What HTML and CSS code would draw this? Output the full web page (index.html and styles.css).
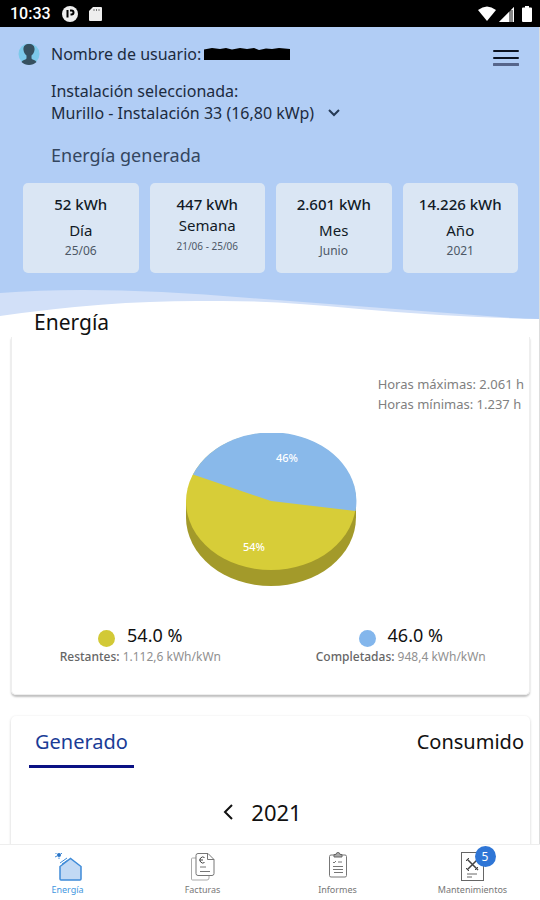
FILE: index.html
```html
<!DOCTYPE html>
<html lang="es">
<head>
  <meta charset="UTF-8" />
  <meta name="viewport" content="width=device-width, initial-scale=1" />
  <title>Energía</title>
  <link rel="stylesheet" href="styles.css">
</head>
<body>

<!-- Barra de estado -->
<div class="statusbar">
  <span class="hora">10:33</span>
  <svg width="16" height="16" viewBox="0 0 16 16">
    <circle cx="8" cy="8" r="8" fill="#eee"/>
    <path d="M5.500 4v7.500M8 4.500h1.500a2 2 0 0 1 0 4H8.500" fill="none" stroke="#000" stroke-width="2"/>
  </svg>
  <svg width="13" height="16" viewBox="0 0 13 16">
    <path d="M4 1h8a1 1 0 0 1 1 1v12a1 1 0 0 1-1 1H1a1 1 0 0 1-1-1V5z" fill="#eee"/>
    <path d="M5 3v2M7.500 3v2M10 3v2" stroke="#777" stroke-width="1"/>
  </svg>
  <div class="senales">
    <svg width="18" height="16" viewBox="0 0 18 16"><path d="M0 4Q9-3 18 4L9 15z" fill="#fff"/></svg>
    <svg width="16" height="16" viewBox="0 0 16 16">
      <path d="M0 16L15 1v15z" fill="#888"/>
      <path d="M0 16L10 6v10zM12 4l3-3v15h-1V4z" fill="#fff"/>
    </svg>
    <svg width="10" height="16" viewBox="0 0 10 16"><path d="M3 0h4v1.500h2a1 1 0 0 1 1 1V15a1 1 0 0 1-1 1H1a1 1 0 0 1-1-1V2.500a1 1 0 0 1 1-1h2z" fill="#fff"/></svg>
  </div>
</div>

<main>
  <header class="cabecera">
    <div class="usuario">
      <svg class="avatar" width="22" height="22" viewBox="0 0 22 22">
        <circle cx="11" cy="11" r="10.500" fill="#7cc9ea"/>
        <path d="M11 1c4 0 6 2.500 5.500 6-.3 2.500-1.500 4.500-3 5.500v3c1 1.500 4 1.500 5 3.500-4 4-11 4-15 0 1-2 4-2 5-3.500v-3C7 11.500 5.800 9.500 5.500 7 5 3.500 7 1 11 1z" fill="#36505f"/>
      </svg>
      <span>Nombre de usuario:</span>
      <svg class="oculto" width="86" height="12" viewBox="0 0 86 12">
        <path d="M0 12V1.500L8 0l8 1 6-1 6 1.500L36 0l7 1 7-1 5 2 7-1.500L68 1l7-1 11 1v11z" fill="#000"/>
      </svg>
      <button class="menu" type="button" aria-label="Menú">
        <svg width="26" height="18" viewBox="0 0 26 18">
          <path d="M1 2h24M1 9h24" stroke="#0b1220" stroke-width="2" stroke-linecap="round"/>
          <path d="M1 15.500h24" stroke="#56658a" stroke-width="3" stroke-linecap="round"/>
        </svg>
      </button>
    </div>

    <div class="instalacion">
      <label for="instalacion">Instalación seleccionada:</label>
      <div class="selector">
        <select id="instalacion">
          <option>Murillo - Instalación 33 (16,80 kWp)</option>
        </select>
        <svg width="12" height="8" viewBox="0 0 12 8"><path d="M1 1l5 5 5-5" fill="none" stroke="#263a55" stroke-width="2"/></svg>
      </div>
    </div>

    <h2>Energía generada</h2>

    <div class="periodos">
      <div class="periodo">
        <strong>52 kWh</strong>
        <span class="nombre">Día</span>
        <span class="fecha">25/06</span>
      </div>
      <div class="periodo semana">
        <strong>447 kWh</strong>
        <span class="nombre">Semana</span>
        <span class="fecha">21/06 - 25/06</span>
      </div>
      <div class="periodo">
        <strong>2.601 kWh</strong>
        <span class="nombre">Mes</span>
        <span class="fecha">Junio</span>
      </div>
      <div class="periodo">
        <strong>14.226 kWh</strong>
        <span class="nombre">Año</span>
        <span class="fecha">2021</span>
      </div>
    </div>

    <svg class="ola" viewBox="0 0 540 32" preserveAspectRatio="none">
      <path d="M0 5Q100-3 250 10L540 32H0z" fill="#d2e0f8"/>
      <path d="M0 28Q110 12 210 13Q270 12 360 21Q450 29 540 31V32H0z" fill="#fff"/>
    </svg>
  </header>

  <h1>Energía</h1>

  <!-- Gráfico de energía -->
  <section class="tarjeta energia">
    <div class="horas">
      <p>Horas máximas: 2.061 h</p>
      <p>Horas mínimas: 1.237 h</p>
    </div>

    <svg class="grafico" width="172" height="154" viewBox="0 0 172 154">
      <path d="M1 68.500V84.500A85 68.500 0 0 0 171 84.500V68.500z" fill="#a39a2a"/>
      <ellipse cx="86" cy="68.500" rx="85" ry="68.500" fill="#d7cd38"/>
      <path d="M86 68L8 41.500A85 68.500 0 0 1 170.500 78z" fill="#89b9ea"/>
      <text x="102" y="29">46%</text>
      <text x="69" y="118">54%</text>
    </svg>

    <div class="leyenda">
      <div>
        <p class="porcentaje"><span class="punto amarillo"></span>54.0 %</p>
        <p class="detalle"><b>Restantes:</b> 1.112,6 kWh/kWn</p>
      </div>
      <div>
        <p class="porcentaje"><span class="punto azul"></span>46.0 %</p>
        <p class="detalle"><b>Completadas:</b> 948,4 kWh/kWn</p>
      </div>
    </div>
  </section>

  <!-- Generado / Consumido -->
  <section class="tarjeta historico">
    <div class="pestanas">
      <button class="activa" type="button">Generado</button>
      <button type="button">Consumido</button>
    </div>
    <div class="anio">
      <button type="button" aria-label="Año anterior">
        <svg width="10" height="16" viewBox="0 0 10 16"><path d="M9 1L2 8l7 7" fill="none" stroke="#111" stroke-width="2"/></svg>
      </button>
      <span>2021</span>
    </div>
  </section>
</main>

<nav>
  <a class="actual" href="#energia">
    <svg width="32" height="32" viewBox="0 0 32 32" fill="none" stroke="#3f8bd8">
      <path d="M8 14.500L18.500 6.500 29 14.500V27a1 1 0 0 1-1 1H9a1 1 0 0 1-1-1z" fill="#c2d9f4" stroke-width="1.500"/>
      <path d="M8 11l7-5M10 12l6-4" stroke-width="1"/>
      <circle cx="7" cy="3" r="2" fill="#2874c8" stroke="none"/>
      <path d="M3.500 1l1 1M3 5l2-1M7 7V5.500M10 1l-1 1" stroke-width="1"/>
    </svg>
    <span>Energía</span>
  </a>
  <a href="#facturas">
    <svg width="32" height="32" viewBox="0 0 32 32" fill="none" stroke="#777">
      <path d="M9 6H5.500a1 1 0 0 0-1 1v20a1 1 0 0 0 1 1H20a2 2 0 0 0 2-2v-2.500" stroke="#aaa"/>
      <path d="M11 1.500h10l6 6V21.500a2 2 0 0 1-2 2H11a2 2 0 0 1-2-2v-18a2 2 0 0 1 2-2zM20.500 1.500v6H27"/>
      <path d="M17.500 5.500a3 3 0 1 0 0 5M12.500 8h3.500" stroke="#444"/>
      <path d="M13 15h6M13 19.500h10"/>
    </svg>
    <span>Facturas</span>
  </a>
  <a href="#informes">
    <svg width="32" height="32" viewBox="0 0 32 32" fill="none" stroke="#777">
      <rect x="7.500" y="3" width="17" height="22" rx="1.500"/>
      <path d="M12 5V2.500h2a2 2 0 0 1 4 0h2V5z" fill="#aaa" stroke="#666"/>
      <path d="M11 10l1 1 2-2M16 10h4M11 14.500h10M11 17.500h10M12 20.500h9"/>
    </svg>
    <span>Informes</span>
  </a>
  <a href="#mantenimientos">
    <svg width="32" height="32" viewBox="0 0 32 32" fill="none" stroke="#666">
      <rect x="4.500" y=".5" width="22" height="28"/>
      <path d="M10 7l11 11M20 8L10 18" stroke="#444" stroke-width="1.500"/>
      <path d="M9 9l3-3M18 18l3-3M9 16l3 3" stroke="#444"/>
      <path d="M10 22h10M10 25h5"/>
    </svg>
    <span>Mantenimientos</span>
    <span class="aviso">5</span>
  </a>
</nav>

</body>
</html>
```
FILE: styles.css
```css
* {
  box-sizing: border-box;
}

body {
  font-family: "Noto Sans", "Open Sans", sans-serif;
  background-color: #fff;
  color: #111;
  margin: 0;
  height: 100vh;
  display: flex;
  flex-direction: column;
}

h1, h2, p {
  margin: 0;
  font-weight: normal;
}

button {
  font-family: inherit;
  color: inherit;
  background: none;
  border: none;
  padding: 0;
  cursor: pointer;
}

svg {
  display: block;
  flex: none;
}

.statusbar {
  height: 27px;
  flex: none;
  padding: 0 8px 0 10px;
  background-color: #000;
  color: #fff;
  display: flex;
  align-items: center;
  gap: 11px;
}

.hora {
  font-family: Roboto, sans-serif;
  font-size: 16px;
  font-weight: 500;
}

.senales {
  margin-left: auto;
  display: flex;
  gap: 3px;
}

.senales svg:last-child {
  margin-left: 4px;
}

main {
  flex: 1;
  min-height: 0;
  overflow: hidden;
  border-right: 1px solid #ddd;
}

.cabecera {
  background-color: #b1cdf5;
  color: #1c2b40;
  padding-top: 14px;
}

.usuario {
  display: flex;
  align-items: center;
  padding: 0 20px 0 18px;
  font-size: 16px;
  line-height: 24px;
}

.avatar {
  margin-right: 11px;
}

.oculto {
  margin-left: 3px;
}

.menu {
  margin-left: auto;
  padding-top: 8px;
}

.instalacion {
  padding: 13px 20px 0 51px;
  font-size: 16px;
  line-height: 22px;
}

.instalacion label {
  display: block;
}

.selector {
  display: flex;
  align-items: center;
  gap: 13px;
}

.selector select {
  appearance: none;
  font: inherit;
  color: inherit;
  background: none;
  border: none;
  padding: 0;
  height: 22px;
}

.cabecera h2 {
  padding: 19px 20px 0 51px;
  font-size: 18px;
  line-height: 24px;
  color: #34465f;
}

.periodos {
  display: grid;
  grid-template-columns: repeat(4, 1fr);
  gap: 11px;
  padding: 16px 21px 15px 23px;
}

.periodo {
  height: 90px;
  padding-top: 10px;
  background-color: #dae6f4;
  border-radius: 5px;
  text-align: center;
  color: #111a26;
}

.periodo strong,
.periodo span {
  display: block;
}

.periodo strong {
  font-size: 15px;
  font-weight: 500;
  line-height: 22px;
}

.periodo .nombre {
  margin-top: 5px;
  font-size: 15px;
  line-height: 20px;
}

.periodo .fecha {
  font-size: 12px;
  line-height: 22px;
  color: #4d5866;
}

.semana .nombre {
  margin-top: 0;
}

.semana .fecha {
  font-size: 10px;
}

.ola {
  width: 100%;
  height: 32px;
}

h1 {
  margin-top: -10px;
  padding-left: 34px;
  position: relative;
  font-size: 21px;
  line-height: 24px;
}

.tarjeta {
  margin: 0 9px 0 11px;
  border-radius: 5px;
  box-shadow: 0 1px 3px rgba(0, 0, 0, 0.2);
}

.energia {
  margin-top: 3px;
  padding-bottom: 27px;
  border: 1px solid #eee;
  border-top: none;
  border-radius: 0 0 5px 5px;
  box-shadow: 0 2px 2px rgba(0, 0, 0, 0.25);
}

.horas {
  width: fit-content;
  margin-left: auto;
  padding: 37px 5px 0 0;
  font-size: 13px;
  line-height: 20px;
  color: #808080;
}

.grafico {
  margin: 19px auto 0;
}

.grafico text {
  font-size: 11px;
  font-weight: 500;
  text-anchor: middle;
  fill: #fff;
}

.leyenda {
  display: grid;
  grid-template-columns: 1fr 1fr;
  gap: 4px;
  padding-top: 37px;
  text-align: center;
}

.porcentaje {
  display: flex;
  justify-content: center;
  gap: 12px;
  font-size: 18px;
  line-height: 22px;
}

.punto {
  width: 17px;
  height: 17px;
  margin-top: 6px;
  border-radius: 50%;
}

.amarillo {
  background-color: #d2c936;
}

.azul {
  background-color: #83b6ec;
}

.detalle {
  font-size: 12px;
  line-height: 20px;
  color: #909090;
}

.detalle b {
  font-weight: 500;
  color: #666;
}

.historico {
  margin-top: 21px;
  height: 300px;
}

.pestanas {
  display: flex;
  justify-content: space-between;
  padding: 9px 0 0 18px;
}

.pestanas button {
  padding: 0 6px 6px;
  font-size: 20px;
  line-height: 34px;
  height: 43px;
  border-bottom: 3px solid transparent;
}

.pestanas .activa {
  color: #1a3c96;
  border-color: #0a1184;
}

.anio {
  display: flex;
  justify-content: center;
  align-items: center;
  gap: 18px;
  padding: 29px 16px 0 0;
  font-size: 22px;
  line-height: 30px;
}

nav {
  flex: none;
  height: 56px;
  border-top: 1px solid #eee;
  background-color: #fff;
  display: grid;
  grid-template-columns: repeat(4, 1fr);
}

nav a {
  position: relative;
  display: flex;
  flex-direction: column;
  align-items: center;
  padding-top: 7px;
  font-size: 9px;
  line-height: 12px;
  color: #777;
  text-decoration: none;
}

nav .actual {
  color: #3f97e0;
}

.aviso {
  position: absolute;
  top: 1px;
  left: calc(50% + 2px);
  width: 21px;
  height: 21px;
  border-radius: 50%;
  background-color: #2f76d6;
  color: #fff;
  font-size: 12px;
  line-height: 21px;
  text-align: center;
}
```
